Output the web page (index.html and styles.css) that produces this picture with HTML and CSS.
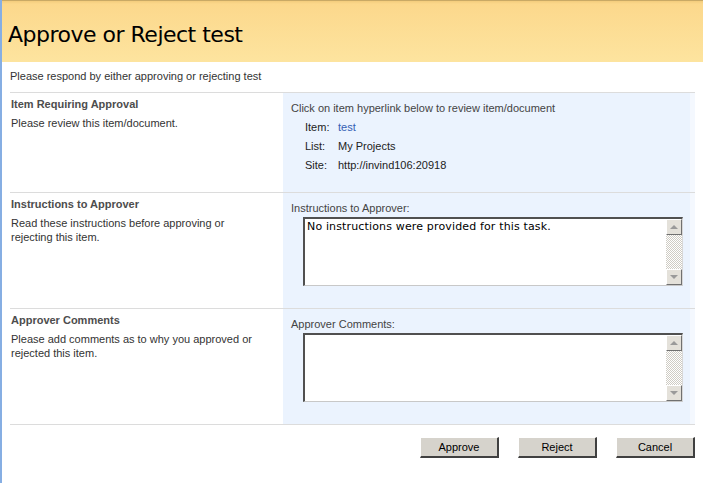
FILE: index.html
```html
<!DOCTYPE html>
<html>
<head>
    <title>Approve or Reject test</title>
    <link rel="stylesheet" href="styles.css">
</head>
<body>
    <div class="page">
        <div class="title-bar">
            <h1>Approve or Reject test</h1>
        </div>
        <div class="intro">Please respond by either approving or rejecting test</div>

        <div class="form">
            <div class="section section-item">
                <div class="section-info">
                    <h3>Item Requiring Approval</h3>
                    <p>Please review this item/document.</p>
                </div>
                <div class="section-body">
                    <div class="field-label">Click on item hyperlink below to review item/document</div>
                    <div class="item-details">
                        <span class="key">Item:</span><a class="val" href="#">test</a>
                        <span class="key">List:</span><span class="val">My Projects</span>
                        <span class="key">Site:</span><span class="val">http://invind106:20918</span>
                    </div>
                </div>
            </div>

            <div class="section">
                <div class="section-info">
                    <h3>Instructions to Approver</h3>
                    <p>Read these instructions before approving or rejecting this item.</p>
                </div>
                <div class="section-body">
                    <div class="field-label">Instructions to Approver:</div>
                    <div class="textbox">
                        <div class="textbox-text">No instructions were provided for this task.</div>
                        <div class="scrollbar">
                            <div class="scroll-btn up"></div>
                            <div class="scroll-track"></div>
                            <div class="scroll-btn down"></div>
                        </div>
                    </div>
                </div>
            </div>

            <div class="section">
                <div class="section-info">
                    <h3>Approver Comments</h3>
                    <p>Please add comments as to why you approved or rejected this item.</p>
                </div>
                <div class="section-body">
                    <div class="field-label">Approver Comments:</div>
                    <div class="textbox">
                        <div class="textbox-text"></div>
                        <div class="scrollbar">
                            <div class="scroll-btn up"></div>
                            <div class="scroll-track"></div>
                            <div class="scroll-btn down"></div>
                        </div>
                    </div>
                </div>
            </div>

            <div class="buttons">
                <button class="btn">Approve</button>
                <button class="btn">Reject</button>
                <button class="btn">Cancel</button>
            </div>
        </div>
    </div>
</body>
</html>
```

FILE: styles.css
```css
* {
    margin: 0;
    padding: 0;
    box-sizing: border-box;
}

body {
    font-family: "Liberation Sans", Arial, sans-serif;
    font-size: 11px;
    color: #333;
    background: #fff;
}

.page {
    min-height: 100vh;
    border-left: 2px solid #86aee3;
}

/* Page title band */
.title-bar {
    height: 62px;
    padding: 21px 0 0 6px;
    background: linear-gradient(to bottom, #f3cc7c 0, #fcd88c 3px, #fde49f 100%);
    border-top: 1px solid #c9a965;
}

.title-bar h1 {
    font-family: "DejaVu Sans", Verdana, sans-serif;
    font-weight: normal;
    font-size: 22px;
    letter-spacing: -0.5px;
    color: #000;
    line-height: 26px;
}

.intro {
    padding: 8px 0 0 8px;
    height: 30px;
}

.form {
    margin: 0 8px 0 8px;
    border-top: 1px solid #dcdcdc;
}

.section {
    display: grid;
    grid-template-columns: 273px 1fr;
    height: 116px;
    border-bottom: 1px solid #dcdcdc;
}

.section-item {
    height: 100px;
}

.section:last-of-type {
    border-bottom: 2px solid #d2d2d2;
}

.section-info {
    padding: 4px 1px;
}

.section-info h3 {
    font-size: 11px;
    color: #4d4d4d;
    line-height: 14px;
    margin-bottom: 5px;
}

.section-info p {
    line-height: 14px;
    padding-right: 30px;
}

.section-body {
    background: #ebf3fe;
    border-right: 5px solid #f4f8fe;
    padding: 8px 0 0 8px;
}

.field-label {
    line-height: 14px;
    color: #444;
}

.item-details {
    display: grid;
    grid-template-columns: 33px auto;
    justify-content: start;
    row-gap: 5px;
    padding: 5px 0 0 14px;
    line-height: 14px;
    color: #222;
}

.item-details a {
    color: #3360b4;
    text-decoration: none;
}

/* Multi-line text box with a classic scrollbar */
.textbox {
    display: flex;
    width: 380px;
    height: 69px;
    margin: 2px 0 0 12px;
    background: #fff;
    border-top: 2px solid #505050;
    border-left: 2px solid #505050;
    border-bottom: 1px solid #c8c8c8;
    border-right: 1px solid #d8d8d8;
}

.textbox-text {
    flex: 1;
    padding: 1px 2px;
    font-family: "DejaVu Sans", Verdana, sans-serif;
    font-size: 11px;
    letter-spacing: 0.15px;
    line-height: 14px;
    color: #000;
}

.scrollbar {
    width: 16px;
    display: flex;
    flex-direction: column;
}

.scroll-track {
    flex: 1;
    background: repeating-conic-gradient(#cfccc4 0 25%, #fff 0 50%) 0 0 / 2px 2px;
}

.scroll-btn {
    height: 16px;
    background: #e4e1da;
    border-top: 1px solid #fff;
    border-left: 1px solid #fff;
    border-right: 1px solid #707070;
    border-bottom: 1px solid #707070;
    display: flex;
    align-items: center;
    justify-content: center;
}

.scroll-btn::after {
    content: "";
    border-left: 4px solid transparent;
    border-right: 4px solid transparent;
}

.scroll-btn.up::after {
    border-bottom: 4px solid #9a9a9a;
}

.scroll-btn.down::after {
    border-top: 4px solid #9a9a9a;
}

.buttons {
    display: flex;
    justify-content: flex-end;
    gap: 19px;
    padding-top: 12px;
}

.btn {
    width: 79px;
    height: 21px;
    font-family: "Liberation Sans", Arial, sans-serif;
    font-size: 11px;
    color: #000;
    background: #d6d3cc;
    border-top: 1px solid #fff;
    border-left: 1px solid #fff;
    border-right: 2px solid #404040;
    border-bottom: 2px solid #404040;
}
```
